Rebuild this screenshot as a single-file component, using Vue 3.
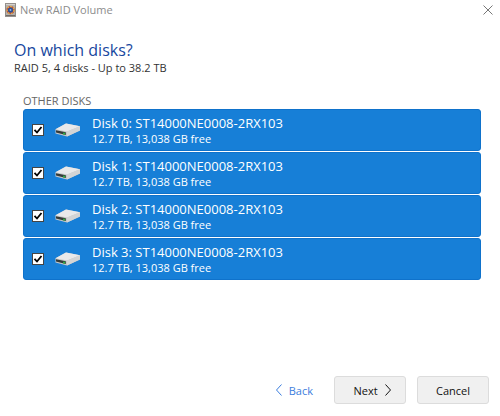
<script setup>
import { ref } from 'vue'

const disks = ref(
  [0, 1, 2, 3].map((n) => ({
    id: n,
    name: `Disk ${n}: ST14000NE0008-2RX103`,
    size: '12.7 TB, 13,038 GB free',
    checked: true,
  }))
)
</script>

<template>
  <div class="window">
    <header class="titlebar">
      <svg class="app-icon" viewBox="0 0 12 15" aria-hidden="true">
        <rect x="0.5" y="0.5" width="11" height="14" fill="#b5b1ac" stroke="#8a8682" />
        <path d="M1 1.500h10" stroke="#d8d5d1" />
        <path d="M1 13.500h10" stroke="#6a6663" />
        <circle cx="6" cy="7.500" r="4.500" fill="#b5493c" />
        <circle cx="6" cy="7.500" r="3.800" fill="none" stroke="#e0b04c" stroke-width="1.500" stroke-dasharray="2 1.400" />
        <circle cx="6" cy="7.500" r="2.800" fill="#27509a" />
        <circle cx="6" cy="7.500" r="1" fill="#8fb5e6" />
      </svg>
      <span class="title">New RAID Volume</span>
      <button class="close" type="button" aria-label="Close">
        <svg viewBox="0 0 10 10"><path d="M0.500 0.500l9 9M9.500 0.500l-9 9" /></svg>
      </button>
    </header>

    <main class="content">
      <h1>On which disks?</h1>
      <p class="summary">RAID 5, 4 disks - Up to 38.2 TB</p>
      <h2>OTHER DISKS</h2>
      <ul class="disks">
        <li v-for="disk in disks" :key="disk.id">
          <label class="disk">
            <input v-model="disk.checked" type="checkbox" />
            <svg class="drive" viewBox="0 0 26 14" aria-hidden="true">
              <path d="M0.500 6.200L11 0.500L25 3.200V7.500L12 13.500L0.500 10.500Z" fill="#c6c7c8" />
              <path d="M0.500 6.200L11 0.500L25 3.200L12 8.600Z" fill="#e9e9ea" />
              <path d="M12 8.600L25 3.200V7.500L12 13.500Z" fill="#d3d4d5" />
              <path d="M1 7.200L10.800 9.200V12L1 9.600Z" fill="#353b39" />
              <path d="M8 9.700h2.200v1.800H8z" fill="#2fae43" />
            </svg>
            <span class="text">
              <span class="name">{{ disk.name }}</span>
              <span class="size">{{ disk.size }}</span>
            </span>
          </label>
        </li>
      </ul>
    </main>

    <footer class="actions">
      <button class="back" type="button">
        <svg class="chevron" viewBox="0 0 6 12"><path d="M5.500 0.500L0.500 6l5 5.500" /></svg>
        Back
      </button>
      <button class="button next" type="button">
        Next
        <svg class="chevron" viewBox="0 0 6 12"><path d="M0.500 0.500L5.500 6l-5 5.500" /></svg>
      </button>
      <button class="button" type="button">Cancel</button>
    </footer>
  </div>
</template>

<style>
body {
  margin: 0;
  background: #fff;
}
</style>

<style scoped>
.window {
  display: flex;
  flex-direction: column;
  min-height: 100vh;
  box-sizing: border-box;
  background: #fff;
  color: #222;
  font-family: "Open Sans", "Noto Sans", sans-serif;
  font-size: 11px;
}
.titlebar {
  display: flex;
  align-items: center;
  height: 20px;
  padding: 0 7px 0 5px;
}
.app-icon {
  width: 11px;
  height: 14px;
}
.title {
  flex: 1;
  margin-left: 4px;
  color: #8c8c8c;
  line-height: 20px;
}
button {
  font: inherit;
  color: inherit;
  cursor: pointer;
}
.close {
  display: flex;
  padding: 0;
  border: 0;
  background: none;
}
.close svg {
  width: 10px;
  height: 10px;
  fill: none;
  stroke: #777;
}
.content {
  flex: 1;
  padding: 19px 19px 0 14px;
}
h1 {
  margin: 0;
  color: #17479e;
  font-size: 16px;
  font-weight: 400;
  line-height: 22px;
}
.summary {
  margin: 0;
  color: #333;
  line-height: 14px;
}
h2 {
  margin: 18px 0 0 9px;
  padding-bottom: 1px;
  color: #666;
  font-size: 11px;
  font-weight: 400;
  line-height: 15px;
}
.disks {
  display: grid;
  gap: 1px;
  margin: 0 0 0 9px;
  padding: 0;
  list-style: none;
}
.disk {
  display: flex;
  align-items: center;
  box-sizing: border-box;
  height: 42px;
  padding: 0 8px;
  border: 1px solid #0f72cb;
  border-radius: 3px;
  background: #177fd7;
  color: #fff;
}
input {
  appearance: none;
  width: 12px;
  height: 12px;
  margin: 0;
  border: 1px solid #444;
  background: #fff;
}
input:checked {
  background: #fff url("data:image/svg+xml,%3Csvg xmlns='http://www.w3.org/2000/svg' viewBox='0 0 10 10'%3E%3Cpath d='M1.500 4.800L4 7.500L8.500 2' fill='none' stroke='%23000' stroke-width='1.800'/%3E%3C/svg%3E") center / 10px 10px no-repeat;
}
.drive {
  width: 26px;
  height: 14px;
  margin: 0 11px;
}
.text {
  display: flex;
  flex-direction: column;
}
.name {
  font-size: 13px;
  line-height: 17px;
}
.size {
  line-height: 14px;
}
.actions {
  display: flex;
  justify-content: flex-end;
  align-items: center;
  gap: 11px;
  padding: 0 11px 12px;
}
.button {
  display: flex;
  align-items: center;
  justify-content: center;
  gap: 7px;
  box-sizing: border-box;
  width: 72px;
  height: 28px;
  padding: 0;
  border: 1px solid #dcdcdc;
  border-radius: 3px;
  background: #f0f0f0;
  color: #111;
}
.next {
  padding-left: 4px;
}
.back {
  display: flex;
  align-items: center;
  gap: 7px;
  margin-right: 10px;
  padding: 0;
  border: 0;
  background: none;
  color: #3b7ddd;
}
.chevron {
  width: 6px;
  height: 12px;
  fill: none;
  stroke: currentColor;
}
</style>
